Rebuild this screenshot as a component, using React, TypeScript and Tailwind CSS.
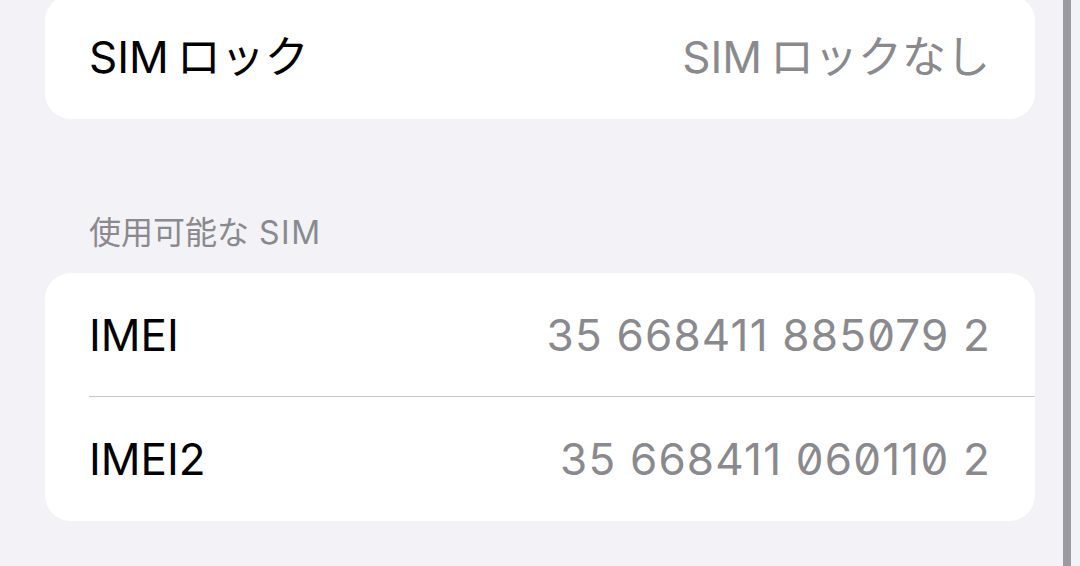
import type { ReactNode } from "react";

// ─── Data ─────────────────────────────────────────────────────

const SIM_ROWS = [
  { label: "IMEI", value: "35 668411 885079 2", numeric: true },
  { label: "IMEI2", value: "35 668411 060110 2", numeric: true },
];

const FONT_STACK =
  "font-['Inter','Noto_Sans_CJK_JP','Noto_Sans',sans-serif]";

// ─── Pieces ───────────────────────────────────────────────────

function Row({
  label,
  value,
  numeric,
  divider,
}: {
  label: ReactNode;
  value: ReactNode;
  numeric?: boolean;
  divider?: boolean;
}) {
  return (
    <div className="pl-[44px]">
      <div
        className={
          "flex h-[124px] items-center justify-between pr-[45px] " +
          (divider ? "border-b border-[#c8c7cc]" : "")
        }
      >
        <span className="text-[44px] leading-none text-black">{label}</span>
        <span
          className={
            "text-[44px] leading-none text-[#8a8a8e] " +
            (numeric ? "slashed-zero tracking-[1.2px] -mr-[1px]" : "")
          }
        >
          {value}
        </span>
      </div>
    </div>
  );
}

function Card({ children, className = "" }: { children: ReactNode; className?: string }) {
  return (
    <div className={"overflow-hidden rounded-[26px] bg-white " + className}>
      {children}
    </div>
  );
}

// ─── Screen ───────────────────────────────────────────────────

export default function App() {
  return (
    <div className={"flex h-[566px] w-[1080px] overflow-hidden bg-[#f2f2f7] " + FONT_STACK}>
      <div className="flex-1 pl-[45px] pr-[28px]">
        {/* SIM lock card, scrolled partly out of view */}
        <Card className="-mt-[5px]">
          <Row label={"SIM\u2009ロック"} value={"SIM\u2009ロックなし"} />
        </Card>

        {/* Available SIM section */}
        <div className="mt-[94px] h-[40px] pl-[44px] text-[32px] leading-[40px] text-[#8a8a8e]">
          使用可能な<span className="ml-[10px] tracking-[1.5px]">SIM</span>
        </div>
        <Card className="mt-[20px]">
          {SIM_ROWS.map((row, i) => (
            <Row
              key={row.label}
              label={row.label}
              value={row.value}
              numeric={row.numeric}
              divider={i < SIM_ROWS.length - 1}
            />
          ))}
        </Card>
      </div>

      {/* scroll indicator */}
      <div className="w-[8px] shrink-0 bg-[#9b9aa0]" />
      <div className="w-[9px] shrink-0" />
    </div>
  );
}
